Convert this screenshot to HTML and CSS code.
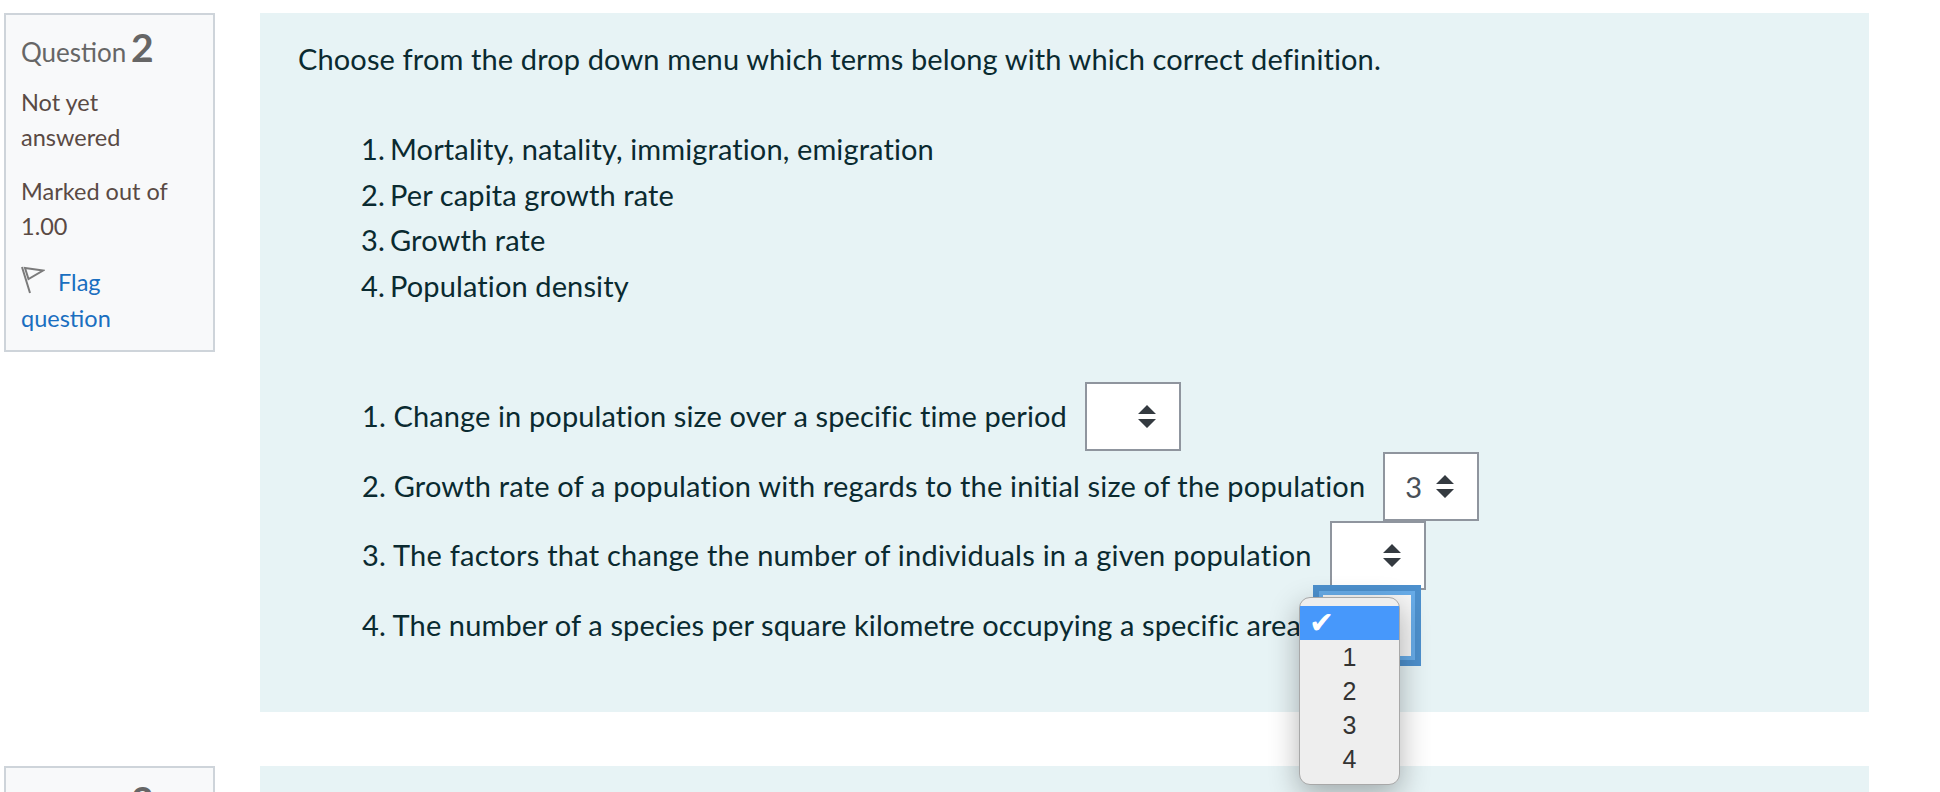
FILE: index.html
```html
<!DOCTYPE html>
<html lang="en">
<head>
    <meta charset="UTF-8">
    <title>Quiz</title>
    <link rel="stylesheet" href="styles.css">
</head>
<body>
    <div class="que">
        <div class="info">
            <h3 class="no">Question <span class="qno">2</span></h3>
            <div class="state">Not yet answered</div>
            <div class="grade">Marked out of 1.00</div>
            <div class="flag">
                <svg class="flag-icon" width="24" height="28" viewBox="0 0 24 28"><path d="M1 1l8 26M4 2l18 2.500L7.500 13z" fill="none" stroke="#7b7b7b" stroke-width="2"/></svg>
                <a href="#">Flag question</a>
            </div>
        </div>
        <div class="content">
            <p class="qtext">Choose from the drop down menu which terms belong with which correct definition.</p>
            <ol class="terms">
                <li>Mortality, natality, immigration, emigration</li>
                <li>Per capita growth rate</li>
                <li>Growth rate</li>
                <li>Population density</li>
            </ol>
            <div class="answer">
                <div class="row">
                    <span>1. Change in population size over a specific time period</span>
                    <span class="pick"><span class="val"></span><svg width="18" height="23" viewBox="0 0 18 23"><path d="M9 0l9 9H0zM9 23l9-9H0z" fill="#343a40"/></svg></span>
                </div>
                <div class="row row-loose">
                    <span>2. Growth rate of a population with regards to the initial size of the population</span>
                    <span class="pick"><span class="val">3</span><svg width="18" height="23" viewBox="0 0 18 23"><path d="M9 0l9 9H0zM9 23l9-9H0z" fill="#343a40"/></svg></span>
                </div>
                <div class="row row-looser">
                    <span>3. The factors that change the number of individuals in a given population</span>
                    <span class="pick"><span class="val"></span><svg width="18" height="23" viewBox="0 0 18 23"><path d="M9 0l9 9H0zM9 23l9-9H0z" fill="#343a40"/></svg></span>
                </div>
                <div class="row">
                    <span>4. The number of a species per square kilometre occupying a specific area</span>
                    <span class="pick focused">
                        <div class="menu">
                            <div class="opt selected">✔</div>
                            <div class="opt">1</div>
                            <div class="opt">2</div>
                            <div class="opt">3</div>
                            <div class="opt">4</div>
                        </div>
                    </span>
                </div>
            </div>
        </div>
    </div>
    <div class="que">
        <div class="info">
            <h3 class="no">Question <span class="qno">3</span></h3>
        </div>
        <div class="content"></div>
    </div>
</body>
</html>
```

FILE: styles.css
```css
html {
    overflow: hidden;
}
body {
    margin: 0;
    padding: 13px 0 0 4px;
    background-color: #fff;
    font-family: Lato, "Noto Sans", sans-serif;
    color: #0a2a30;
}
.que {
    display: flex;
    gap: 45px;
    align-items: flex-start;
    margin-bottom: 54px;
}
.info {
    box-sizing: border-box;
    width: 211px;
    height: 339px;
    padding: 9px 15px 0;
    flex: none;
    background-color: #f8f9fa;
    border: 2px solid #ced4da;
    font-size: 23.500px;
    line-height: 35px;
    color: #5a4a44;
}
.no {
    margin: 0 0 10px;
    font-size: 26px;
    font-weight: normal;
    line-height: 46px;
    color: #666;
}
.qno {
    margin-left: -2px;
    font-size: 39px;
    font-weight: bold;
}
.grade {
    margin-top: 19px;
}
.flag {
    max-width: 150px;
    margin-top: 20px;
    line-height: 36px;
}
.flag-icon {
    margin-right: 7px;
    vertical-align: -3px;
}
.flag a {
    color: #1a6fc0;
    text-decoration: none;
}
.content {
    box-sizing: border-box;
    width: 1609px;
    height: 699px;
    padding: 23px 38px 0;
    flex: none;
    background-color: #e7f3f5;
    font-size: 29px;
    letter-spacing: 0.120px;
}
.qtext {
    margin: 0;
    line-height: 46px;
}
.terms {
    margin: 44px 0 0;
    padding-left: 63px;
    line-height: 45.500px;
    list-style: none;
    counter-reset: term;
}
.terms li {
    display: flex;
    counter-increment: term;
}
.terms li::before {
    content: counter(term) ".";
    width: 29px;
}
.answer {
    margin-top: 73px;
    padding-left: 64px;
}
.row {
    display: flex;
    align-items: center;
    gap: 18px;
    height: 69.500px;
}
.row-loose {
    letter-spacing: 0.180px;
}
.row-looser {
    letter-spacing: 0.240px;
}
.pick {
    box-sizing: border-box;
    display: flex;
    align-items: center;
    justify-content: flex-end;
    gap: 14px;
    position: relative;
    width: 96px;
    height: 69px;
    margin-top: 2px;
    padding-right: 23px;
    background-color: #fff;
    border: 2px solid #8f959e;
}
.val {
    color: #495057;
}
.focused {
    background-color: #f6f6f6;
    border: 4px solid #68ace8;
    box-shadow: 0 0 0 6px #4d90cd;
}
.menu {
    box-sizing: border-box;
    position: absolute;
    left: -24px;
    top: 2px;
    width: 101px;
    height: 188px;
    padding-top: 8px;
    z-index: 2;
    background-color: #eee;
    border: 1px solid #a8a8a8;
    border-radius: 11px;
    box-shadow: 0 10px 30px rgba(0, 0, 0, 0.3);
    font-family: "Liberation Sans", Arial, sans-serif;
    font-size: 25px;
    letter-spacing: 0;
    color: #333;
}
.opt {
    height: 34px;
    line-height: 34px;
    text-align: center;
}
.selected {
    padding-left: 9px;
    background-color: #4798fb;
    color: #fff;
    font-family: "DejaVu Sans", sans-serif;
    font-size: 30px;
    text-align: left;
}
```
